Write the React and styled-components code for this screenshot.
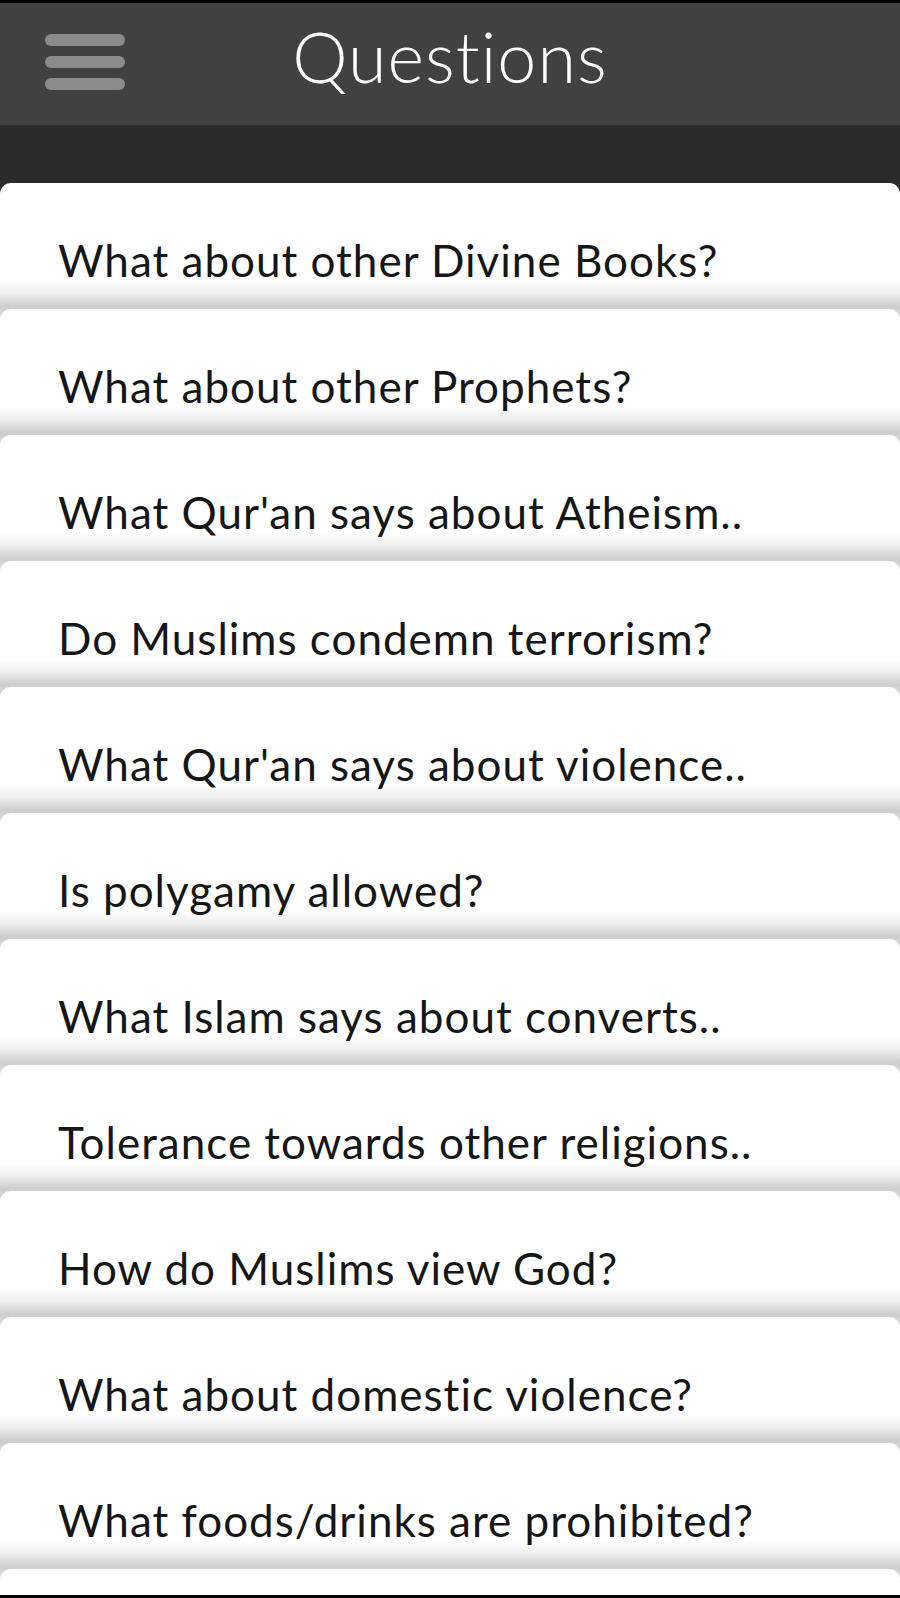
import React from "react";
import styled, { createGlobalStyle } from "styled-components";

const questions = [
	"What about other Divine Books?",
	"What about other Prophets?",
	"What Qur'an says about Atheism..",
	"Do Muslims condemn terrorism?",
	"What Qur'an says about violence..",
	"Is polygamy allowed?",
	"What Islam says about converts..",
	"Tolerance towards other religions..",
	"How do Muslims view God?",
	"What about domestic violence?",
	"What foods/drinks are prohibited?",
	"",
];

export default function App() {
	return (
		<Screen>
			<GlobalStyle />
			<Header>
				<Burger aria-label="menu">
					<span />
					<span />
					<span />
				</Burger>
				<Title>Questions</Title>
				<div />
			</Header>
			<Band />
			<List>
				{questions.map((q, i) => (
					<Card key={i}>{q}</Card>
				))}
			</List>
		</Screen>
	);
}

const GlobalStyle = createGlobalStyle`
	html, body {
		margin: 0;
		padding: 0;
		background: #000;
	}
`;

const Screen = styled.div`
	width: 900px;
	height: 1598px;
	box-sizing: border-box;
	padding: 3px 0 3px;
	overflow: hidden;
	background: #000;
	font-family: Lato, "Noto Sans", sans-serif;
	display: flex;
	flex-direction: column;
`;

const Header = styled.div`
	height: 122px;
	flex-shrink: 0;
	background: #414141;
	display: grid;
	grid-template-columns: 1fr auto 1fr;
	align-items: center;
	padding: 0 45px;
`;

const Burger = styled.div`
	width: 80px;
	display: flex;
	flex-direction: column;
	gap: 10px;
	margin-top: -4px;
	span {
		display: block;
		height: 12px;
		border-radius: 6px;
		background: #8b8b8b;
	}
`;

const Title = styled.div`
	color: #fff;
	font-weight: 300;
	font-size: 70px;
	letter-spacing: 1px;
	line-height: 1;
	margin-top: -16px;
`;

const Band = styled.div`
	height: 70px;
	flex-shrink: 0;
	background: #2b2b2b;
`;

const List = styled.div`
	display: flex;
	flex-direction: column;
	flex: 1;
	overflow: hidden;
	background: #2b2b2b;
	margin-top: -12px;
`;

const Card = styled.div`
	flex-shrink: 0;
	height: 138px;
	margin-bottom: -12px;
	border-radius: 11px 11px 0 0;
	box-sizing: border-box;
	padding: 47px 0 0 58px;
	font-size: 44px;
	letter-spacing: 1px;
	line-height: 60px;
	color: #161616;
	background: linear-gradient(
		to bottom,
		#fff 0,
		#fff 98px,
		#efefef 110px,
		#cdcdcd 124px,
		#d9d9d9 130px,
		#f0f0f0 138px
	);
	white-space: nowrap;
`;
